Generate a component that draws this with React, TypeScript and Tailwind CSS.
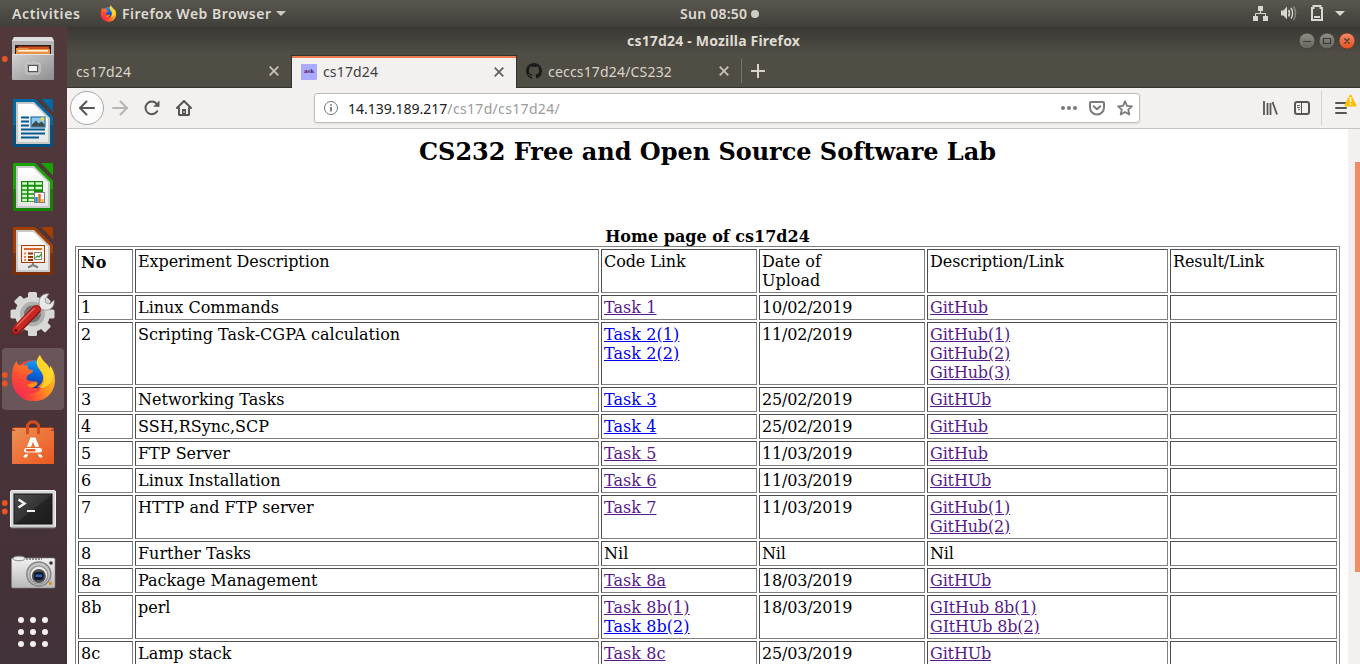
import type { ReactNode } from "react";

type Link = { text: string; fresh?: boolean };
type Row = { no: string; name: string; code: (Link | string)[]; date: string; links: (Link | string)[] };

const v = (text: string): Link => ({ text });
const n = (text: string): Link => ({ text, fresh: true });

const rows: Row[] = [
  { no: "1", name: "Linux Commands", code: [v("Task 1")], date: "10/02/2019", links: [v("GitHub")] },
  { no: "2", name: "Scripting Task-CGPA calculation", code: [n("Task 2(1)"), n("Task 2(2)")], date: "11/02/2019", links: [v("GitHub(1)"), v("GitHub(2)"), v("GitHub(3)")] },
  { no: "3", name: "Networking Tasks", code: [n("Task 3")], date: "25/02/2019", links: [v("GitHUb")] },
  { no: "4", name: "SSH,RSync,SCP", code: [n("Task 4")], date: "25/02/2019", links: [v("GitHub")] },
  { no: "5", name: "FTP Server", code: [v("Task 5")], date: "11/03/2019", links: [v("GitHub")] },
  { no: "6", name: "Linux Installation", code: [v("Task 6")], date: "11/03/2019", links: [v("GitHUb")] },
  { no: "7", name: "HTTP and FTP server", code: [v("Task 7")], date: "11/03/2019", links: [v("GitHub(1)"), v("GitHub(2)")] },
  { no: "8", name: "Further Tasks", code: ["Nil"], date: "Nil", links: ["Nil"] },
  { no: "8a", name: "Package Management", code: [v("Task 8a")], date: "18/03/2019", links: [v("GitHUb")] },
  { no: "8b", name: "perl", code: [v("Task 8b(1)"), n("Task 8b(2)")], date: "18/03/2019", links: [v("GItHub 8b(1)"), v("GItHUb 8b(2)")] },
  { no: "8c", name: "Lamp stack", code: [v("Task 8c")], date: "25/03/2019", links: [v("GitHUb")] },
];

function Cell({ children }: { children?: ReactNode }) {
  return (
    <td className="border border-t-[#4d4d4d] border-l-[#4d4d4d] border-r-[#808080] border-b-[#808080] p-[2px] align-top">
      {children}
    </td>
  );
}

function Lines({ items }: { items: (Link | string)[] }) {
  return (
    <>
      {items.map((item, i) =>
        typeof item === "string" ? (
          <div key={i}>{item}</div>
        ) : (
          <div key={i}>
            <a className={item.fresh ? "text-[#0000ee] underline" : "text-[#551a8b] underline"}>{item.text}</a>
          </div>
        ),
      )}
    </>
  );
}

function FirefoxMark() {
  return (
    <g>
      <circle cx="33" cy="33.500" r="20.500" fill="url(#fxBody)" />
      <circle cx="34.500" cy="27.500" r="14" fill="url(#fxBlue)" />
      <path d="M12 34c-.5-8 .5-14 4.500-20 .6 2 1 3.300 2.300 4.300 3-.7 5.200-.5 7.200.4.300-.7.700-1.200 1.500-1.700-.2 2.500.3 3.700 1.500 5.500 1.500.3 3 .4 4 .8 0 2-1.500 3.200-5 4.700-1.300 1.500-1.800 3-1 5 2.500 1 6 1.500 10.500 2-1.500 3-4.500 3.500-7 3.500 3 3 8 4 13 1.500L36 52c-14 2-23-7-24-18z" fill="url(#fxRed)" />
      <path d="M27 38c3.500-.5 5-2.700 8-2.700 1.700 0 2.800.7 2.500 1.700-1.500 2.500-4.500 4-7.500 3.500z" fill="#ff9414" />
      <path d="M40 8c-3.500 4-4.200 8-2 12 1.500 3 4.500 5 5 9.500.5 5-2 8.500-6 10.500 2 .5 4 .5 6-.5-3 5-9 8-15 7-4-.7-7-2.500-9-5 2 7 8 12.500 16.500 12.500C46 54 55 45 55 33c0-6-1.500-10.500-5-14.500.2 1.500.2 2.500-.2 3.500C48.500 17 41.500 14 40 8z" fill="url(#fxFlame)" />
      <path d="M40 8c-3.500 4-4.200 8-2 12 2.500 4 5.500 6 6 11 .5 4-1.500 8-5 10.500C47 41 53.500 36 53 27c-.3-3-1.500-6-3-8.500.2 1.500.2 2.500-.2 3.500C48.500 17 41.500 14 40 8z" fill="#ffe52e" opacity=".7" />
    </g>
  );
}

function Gradients() {
  return (
    <svg className="absolute size-0" aria-hidden>
      <defs>
        <linearGradient id="fxBody" x1="0" y1="0" x2="1" y2="1"><stop offset="0" stopColor="#ff5a2a" /><stop offset=".5" stopColor="#f9214e" /><stop offset="1" stopColor="#ff9a14" /></linearGradient>
        <linearGradient id="fxRed" x1="0.6" y1="0" x2=".2" y2="1"><stop offset="0" stopColor="#ff8a1c" /><stop offset=".5" stopColor="#fb4a35" /><stop offset="1" stopColor="#f52458" /></linearGradient>
        <linearGradient id="fxFlame" x1="1" y1=".1" x2="0" y2=".9"><stop offset="0" stopColor="#ffd535" /><stop offset=".45" stopColor="#ff961a" /><stop offset=".8" stopColor="#fa4a38" /><stop offset="1" stopColor="#f41f5e" /></linearGradient>
        <linearGradient id="fxBlue" x1=".6" y1="0" x2=".4" y2="1"><stop offset="0" stopColor="#14a0f5" /><stop offset=".5" stopColor="#0863d8" /><stop offset="1" stopColor="#1b2f8e" /></linearGradient>
        <linearGradient id="metal" x1="0" y1="0" x2="1" y2="1"><stop offset="0" stopColor="#d2d2d2" /><stop offset="1" stopColor="#8e8e8e" /></linearGradient>
        <linearGradient id="paper" x1="0" y1="0" x2="0" y2="1"><stop offset="0" stopColor="#ffffff" /><stop offset="1" stopColor="#e6e6e6" /></linearGradient>
        <linearGradient id="bag" x1="0" y1="0" x2="1" y2="1"><stop offset="0" stopColor="#ea9255" /><stop offset=".6" stopColor="#ee6d35" /><stop offset="1" stopColor="#e9581f" /></linearGradient>
        <linearGradient id="screen" x1="0" y1="0" x2="1" y2="1"><stop offset="0" stopColor="#4c4c4c" /><stop offset=".5" stopColor="#343434" /><stop offset=".52" stopColor="#242424" /><stop offset="1" stopColor="#1c1c1c" /></linearGradient>
        <linearGradient id="camera" x1="0" y1="0" x2="0" y2="1"><stop offset="0" stopColor="#f2f2f2" /><stop offset="1" stopColor="#b9b9b9" /></linearGradient>
        <linearGradient id="knob" x1="0" y1="0" x2="0" y2="1"><stop offset="0" stopColor="#908e87" /><stop offset="1" stopColor="#65635c" /></linearGradient>
        <linearGradient id="knobClose" x1="0" y1="0" x2="0" y2="1"><stop offset="0" stopColor="#f58a68" /><stop offset="1" stopColor="#e2501f" /></linearGradient>
      </defs>
    </svg>
  );
}

function Dock({ children, dots = [] }: { children: ReactNode; dots?: number[] }) {
  return (
    <svg className="block h-16 w-[67px] shrink-0" viewBox="0 0 67 64">
      {children}
      {dots.map((y) => (
        <circle key={y} cx="4.800" cy={y} r="2.900" fill="#e95420" />
      ))}
    </svg>
  );
}

function Sheet({ color, dark, children }: { color: string; dark: string; children: ReactNode }) {
  return (
    <g>
      <path d="M14 8h21l18 18v29a1 1 0 0 1-1 1H14a1 1 0 0 1-1-1V9a1 1 0 0 1 1-1z" fill={color} />
      <path d="M13 34h40v21a1 1 0 0 1-1 1H14a1 1 0 0 1-1-1z" fill={dark} opacity=".55" />
      <path d="M41 8h11a1 1 0 0 1 1 1v11.500z" fill={color} />
      <path d="M16 11h18l16 16v26H16z" fill="#c9c9c9" />
      <path d="M18 13h15.500L48 27.500V51H18z" fill="url(#paper)" />
      {children}
    </g>
  );
}

function Launcher() {
  return (
    <nav className="flex w-[67px] shrink-0 flex-col overflow-hidden bg-gradient-to-b from-[#51393c] via-[#4c3439] to-[#413138]">
      <Dock dots={[32]}>
        <path d="M14 10h38l2 4v38H12V14z" fill="#b5b5b5" />
        <path d="M14 10h38l2 4H12z" fill="#dedede" />
        <rect x="15" y="18" width="36" height="10" fill="#2d1c16" />
        <rect x="18" y="19.500" width="31" height="8" fill="#cf4f1d" />
        <path d="M16 21h12l1 1h21v6H16z" fill="#e99043" />
        <rect x="18" y="23" width="30" height="1.600" fill="#fff3e0" />
        <rect x="12" y="27" width="42" height="26" rx="1" fill="url(#metal)" />
        <path d="M12.500 27.500h41" stroke="#e3e3e3" />
        <rect x="26" y="36" width="14" height="11" rx="2" fill="#aaa" stroke="#d3d3d3" />
        <rect x="28.500" y="38.500" width="9" height="6" fill="#f5f5f5" stroke="#555" />
      </Dock>
      <Dock>
        <Sheet color="#0369a3" dark="#03406b">
          <path d="M21 26.500h8M21 30.500h8M21 34.500h8M21 38.500h24M21 42.500h24M21 46.500h18" stroke="#065a91" strokeWidth="1.800" />
          <rect x="31" y="26" width="14" height="10" fill="#8bc8ee" stroke="#075c93" />
          <path d="M32 35.500v-2l4-4 2.500 3 3-2 3 3v2z" fill="#3e4b4c" />
          <circle cx="42.500" cy="28" r="2" fill="#eed557" />
        </Sheet>
      </Dock>
      <Dock>
        <Sheet color="#18a303" dark="#106802">
          <rect x="21" y="26" width="22" height="21" fill="#138c06" />
          <path d="M22.200 28.500H27M28.500 28.500H34M35.500 28.500H42M22.200 33H27M28.500 33H34M35.500 33H42M22.200 37H27M28.500 37H34M22.200 41H27M28.500 41H34M22.200 45H27M28.500 45H34" stroke="#dcf6d4" strokeWidth="2.700" />
          <rect x="34.500" y="37.500" width="10" height="10" fill="#fff" stroke="#808080" />
          <path d="M36.500 42v5" stroke="#1690d2" strokeWidth="2.500" />
          <path d="M39.500 39v8" stroke="#e7681b" strokeWidth="2.500" />
          <path d="M42.500 44v3" stroke="#edb92c" strokeWidth="2.500" />
        </Sheet>
      </Dock>
      <Dock>
        <Sheet color="#a33e03" dark="#632502">
          <path d="M33 44v3M33 46l-5 2.500M33 46l5 2.500" stroke="#808080" strokeWidth="2" />
          <rect x="21.500" y="26.500" width="23" height="17" fill="#fff1e8" stroke="#a33e03" />
          <path d="M24 30h18" stroke="#d66b2e" strokeWidth="2" />
          <path d="M24 34.500h2M24 38h2M24 41h2" stroke="#e58a59" strokeWidth="2" />
          <path d="M28 34.500h5M28 38h5M28 41h5" stroke="#943407" strokeWidth="2" />
          <rect x="34.500" y="33.500" width="7" height="7" fill="#fff" stroke="#7d8d78" />
          <path d="m35.500 39 2-2 1.500 1 2.500-3" fill="none" stroke="#32972c" strokeWidth="1.300" />
        </Sheet>
      </Dock>
      <Dock>
        <g fill="#d8d8d6">
          <circle cx="32.500" cy="31" r="17.500" />
          <rect x="28" y="9" width="9" height="44" rx="1.500" />
          <rect x="28" y="9" width="9" height="44" rx="1.500" transform="rotate(45 32.500 31)" />
          <rect x="28" y="9" width="9" height="44" rx="1.500" transform="rotate(90 32.500 31)" />
          <rect x="28" y="9" width="9" height="44" rx="1.500" transform="rotate(135 32.500 31)" />
        </g>
        <circle cx="32.500" cy="31" r="10.500" fill="#777174" stroke="#b0b0af" strokeWidth="4" />
        <path d="m36 30 6-8" stroke="#999" strokeWidth="7" />
        <path d="m37 28 7-8" stroke="#e8e8e8" strokeWidth="5" />
        <path d="M39 20c0-6 4-10 10-9l-4 5 1 4 4 1 4-4c1 7-4 11-10 10-3-.5-5-3-5-7z" fill="#e8e8e8" stroke="#8d8d8d" strokeWidth=".800" />
        <path d="M16 47.500 36.500 26.500" stroke="#801611" strokeWidth="9" strokeLinecap="round" />
        <path d="M16 47 36.500 26" stroke="#c92722" strokeWidth="7" strokeLinecap="round" />
        <path d="M17 43 34 25.500" stroke="#e5655d" strokeWidth="1.500" strokeLinecap="round" />
        <circle cx="16" cy="47.500" r="1.600" fill="#401715" />
      </Dock>
      <Dock dots={[28, 36.5]}>
        <rect x="2" y="1" width="62" height="62" rx="4" fill="#6a5559" />
        <FirefoxMark />
      </Dock>
      <Dock>
        <path d="M14 16h38l2 4H12z" fill="#a53a15" />
        <path d="M12 17h42v36H12z" fill="url(#bag)" />
        <path d="M12 17l4 3h34l4-3v3H12z" fill="#b94317" />
        <path d="M27.500 23V14l3-3h5l3 3v9" fill="none" stroke="#d14e1c" strokeWidth="3" />
        <path d="M26.500 42 31.800 28.500h2.400l5.300 13.500" fill="none" stroke="#fff" strokeWidth="3.800" />
        <path d="M24 45.500c.5-1.500 1.500-2 3.500-2l-1 2.500h-2.500zM42 45.500c-.5-1.500-1.500-2-3.500-2l1 2.500H42z" fill="#fff" stroke="#fff" />
        <rect x="24" y="36" width="18" height="6.500" rx="3" fill="#ec6a31" />
        <rect x="24" y="37" width="18" height="4.500" rx="2.200" fill="#fff" />
        <rect x="26" y="38" width="9.500" height="2.500" rx="1" fill="#e95b20" />
      </Dock>
      <Dock dots={[28, 36.5]}>
        <rect x="10.500" y="15.500" width="45" height="37" rx="1.500" fill="#d9d9d9" stroke="#f2f2f2" />
        <path d="M11 52.500h44" stroke="#9a9a9a" strokeWidth="1.500" />
        <rect x="14" y="19" width="38" height="30" fill="url(#screen)" stroke="#151515" />
        <path d="m18.500 24.500 6 4-6 4" fill="none" stroke="#f2f2f2" strokeWidth="2.500" />
        <path d="M27 36h8" stroke="#f2f2f2" strokeWidth="2" />
      </Dock>
      <Dock>
        <rect x="11.500" y="19" width="43.500" height="30" rx="1.500" fill="url(#camera)" stroke="#858585" strokeWidth=".600" />
        <ellipse cx="19" cy="19.500" rx="6" ry="2.300" fill="#eee" stroke="#888" />
        <path d="M26 20h16" stroke="#777" strokeWidth="1.300" strokeDasharray="2 1" />
        <circle cx="38.800" cy="35" r="12" fill="#c4c4c4" stroke="#858585" strokeWidth="1.500" />
        <circle cx="38.800" cy="36" r="9" fill="#ededed" stroke="#999" strokeWidth="1.500" />
        <circle cx="38.800" cy="37" r="7" fill="#4d4d4d" />
        <rect x="34" y="33" width="9.500" height="8" rx="2" fill="#12182b" />
        <path d="M35.500 35.500h6.500v2.500h-6.500z" fill="#2c62b1" />
        <circle cx="51" cy="24" r="1.800" fill="#353535" />
        <rect x="49" y="43" width="2.800" height="2.800" fill="#e58a16" />
      </Dock>
      <Dock>
        {[17, 29, 41].map((y) => [21, 33, 45].map((x) => <circle key={`${x}-${y}`} cx={x} cy={y} r="3" fill="#f2efee" />))}
      </Dock>
    </nav>
  );
}

function Close({ className }: { className: string }) {
  return (
    <svg className={className} viewBox="0 0 10 10" fill="none" stroke="currentColor" strokeWidth="1.700">
      <path d="m.7.700 8.600 8.600M9.300.700.7 9.300" />
    </svg>
  );
}

function TopBar() {
  return (
    <header className="flex h-[27px] shrink-0 items-center bg-gradient-to-b from-[#5a574f] to-[#403f3a] text-[14px] font-semibold text-[#dfdbd2]">
      <span className="ml-3 w-[88px] whitespace-nowrap tracking-[0.6px]">Activities</span>
      <svg className="size-[17px]" viewBox="11 7 45 48"><FirefoxMark /></svg>
      <span className="ml-[5px] w-[154px] whitespace-nowrap tracking-[0.480px]">Firefox Web Browser</span>
      <svg className="h-[5px] w-[10px]" viewBox="0 0 10 5"><path d="M0 0h10L5 5z" fill="#ccc9c2" /></svg>
      <span className="ml-[394px] w-[71px] whitespace-nowrap tracking-[0.250px]">Sun 08:50</span>
      <span className="size-2 rounded-full bg-[#cfccc5]" />
      <svg className="ml-auto h-[27px] w-[108px] shrink-0" viewBox="1252 0 108 27" fill="#dad7d0">
        <path d="M1258 6h5v5h-5zM1253 16h5v5h-5zM1263 16h5v5h-5z" />
        <path d="M1260.500 11v2.500M1255.500 16v-2.500h10V16" fill="none" stroke="#dad7d0" />
        <path d="M1281 10.500h2.500l3.500-4v13l-3.500-4h-2.500z" />
        <path d="M1288.500 10c1.300 2 1.300 4.500 0 6.500" fill="none" stroke="#dad7d0" strokeWidth="1.500" />
        <path d="M1291 8c2 3 2 7.500 0 10.500" fill="none" stroke="#dad7d0" strokeWidth="1.500" />
        <path d="M1293.500 6.500c2.500 4 2.500 9.500 0 13.500" fill="none" stroke="#87847c" strokeWidth="1.500" />
        <path d="M1312 20V8h1.500V6h7v2h1.500v12z" fill="none" stroke="#dad7d0" strokeWidth="2" />
        <path d="M1314 16h6v2h-6z" />
        <path d="M1335 11h10l-5 5z" />
      </svg>
    </header>
  );
}

function TabStrip() {
  return (
    <div className="flex h-[34px] shrink-0 items-end text-[14px] text-[#d9d5cc]">
      <div className="flex h-[34px] w-[224px] items-center border-b border-[#33322e] pl-[9px] pr-[12px]">
        <span className="pt-[2px] tracking-[0.150px]">cs17d24</span>
        <Close className="ml-auto size-[10px] text-[#c9c5bc]" />
      </div>
      <div className="flex h-[33px] w-[226px] items-center border-x border-t border-[#33322e] bg-[#f2f1f0] pl-[9px] pr-[12px] text-[#3f3f3f] shadow-[inset_0_2px_0_#ee7b50]">
        <span className="mb-px flex size-4 items-center justify-center rounded-[1px] bg-[#aaaaff] font-['Liberation_Serif'] text-[7px] font-bold leading-none text-[#4c2356]">ask</span>
        <span className="ml-[6px] pb-[2px] tracking-[0.150px]">cs17d24</span>
        <Close className="ml-auto size-[10px] text-[#5e5e5e]" />
      </div>
      <div className="flex h-[34px] flex-1 items-center border-b border-[#33322e] pl-[9px]">
        <svg className="size-4" viewBox="0 0 16 16" fill="#1b1b1b">
          <path d="M8 0C3.580 0 0 3.580 0 8c0 3.540 2.290 6.530 5.470 7.590.4.070.55-.17.55-.38 0-.19-.01-.82-.01-1.490-2.010.37-2.530-.49-2.690-.94-.09-.23-.48-.94-.82-1.130-.28-.15-.68-.52-.01-.53.63-.01 1.080.58 1.230.82.72 1.210 1.870.87 2.330.66.07-.52.28-.87.51-1.070-1.780-.2-3.640-.89-3.640-3.950 0-.87.31-1.590.82-2.150-.08-.2-.36-1.020.08-2.120 0 0 .67-.21 2.200.82.64-.18 1.320-.27 2-.27s1.360.09 2 .27c1.530-1.040 2.200-.82 2.200-.82.44 1.100.16 1.920.08 2.120.51.56.82 1.270.82 2.150 0 3.070-1.870 3.750-3.650 3.950.29.25.54.73.54 1.480 0 1.070-.01 1.930-.01 2.200 0 .21.15.46.55.38A8.010 8.010 0 0 0 16 8c0-4.420-3.580-8-8-8z" />
        </svg>
        <span className="ml-[6px] w-[171px] pt-[2px] tracking-[0.180px]">ceccs17d24/CS232</span>
        <Close className="size-[10px] text-[#c9c5bc]" />
        <span className="ml-[12px] h-6 w-px bg-[#77746c]" />
        <svg className="ml-[9px] size-[14px]" viewBox="0 0 14 14" stroke="#d8d4cb" strokeWidth="2"><path d="M7 0v14M0 7h14" /></svg>
      </div>
    </div>
  );
}

function Toolbar() {
  return (
    <div className="flex h-[41px] shrink-0 items-center border-b border-[#c7c3bf] bg-[#f2f1f0] text-[14px]">
      <span className="ml-[3px] flex size-[34px] items-center justify-center rounded-full border border-[#a9a7a5] bg-[#fcfcfc]">
        <svg className="size-4" viewBox="0 0 16 16" fill="none" stroke="#575655" strokeWidth="2" strokeLinecap="round" strokeLinejoin="round"><path d="M15 8H1.500M7.500 1.500 1 8l6.500 6.500" /></svg>
      </span>
      <svg className="ml-2 size-4" viewBox="0 0 16 16" fill="none" stroke="#b8b6b4" strokeWidth="2" strokeLinecap="round" strokeLinejoin="round"><path d="M1 8h13.500M8.500 1.500 15 8l-6.500 6.500" /></svg>
      <svg className="ml-4 size-4" viewBox="0 0 16 16" fill="none" stroke="#575655" strokeWidth="2"><path d="M13.200 11.200A6.300 6.300 0 1 1 12.500 3.700L14 5.500" strokeLinecap="round" /><path d="M15.500.500v6.300H9.200z" fill="#575655" stroke="none" /></svg>
      <svg className="ml-4 size-4" viewBox="0 0 16 16" fill="none" stroke="#575655" strokeWidth="2" strokeLinecap="round" strokeLinejoin="round"><path d="m1 8 7-7 7 7" /><path d="M3 8v6.500a.5.500 0 0 0 .5.500h9a.5.500 0 0 0 .5-.500V8" /><path d="M6 15V9h4v6z" fill="#575655" stroke="none" /><path d="M8 11.500v1" stroke="#f2f1f0" strokeWidth="1" /></svg>
      <div className="ml-[122px] flex h-[30px] w-[826px] items-center rounded-[3px] border border-[#bfbcb9] bg-white pl-[9px] pr-[6px] shadow-[0_1px_2px_rgba(0,0,0,0.08)]">
        <svg className="size-[14px]" viewBox="0 0 14 14" fill="none" stroke="#737373"><circle cx="7" cy="7" r="6.500" /><path d="M7 6v4.500M7 3.200v1.500" strokeWidth="1.800" /></svg>
        <span className="ml-[10px] whitespace-nowrap text-[#202020]">14.139.189.217<span className="tracking-[0.330px] text-[#9b9b9b]">/cs17d/cs17d24/</span></span>
        <svg className="ml-auto h-4 w-4" viewBox="0 0 16 16" fill="#7a7a7a"><circle cx="2" cy="8" r="2" /><circle cx="8" cy="8" r="2" /><circle cx="14" cy="8" r="2" /></svg>
        <svg className="ml-3 size-4" viewBox="0 0 16 16" fill="none" stroke="#7a7a7a" strokeWidth="2" strokeLinecap="round" strokeLinejoin="round"><path d="M2 2h12a1 1 0 0 1 1 1v4.500a7 7 0 0 1-14 0V3a1 1 0 0 1 1-1z" /><path d="m4.700 6.200 3.300 3 3.300-3" /></svg>
        <svg className="ml-3 size-4" viewBox="0 0 16 16" fill="none" stroke="#7a7a7a" strokeWidth="1.800" strokeLinejoin="round"><path d="m8 1.300 2 4.500 4.900.500-3.700 3.300 1.100 4.900L8 12l-4.300 2.500 1.100-4.900L1.100 6.300 6 5.800z" /></svg>
      </div>
      <svg className="ml-[122px] size-4" viewBox="0 0 16 16" stroke="#575655" fill="none" strokeWidth="2"><path d="M2 1v14M5.500 3v12M8.500 3v12M10.500 2l4.500 12.500" strokeWidth="1.800" /></svg>
      <svg className="ml-4 size-4" viewBox="0 0 16 16" stroke="#575655" fill="none"><rect x="1" y="2" width="14" height="12" rx="2" strokeWidth="2" /><path d="M7.500 2v12" /><path d="M3 5.500h3M3 7.500h3M4 9.500h2" strokeWidth=".900" /></svg>
      <span className="ml-[11px] h-[34px] w-px bg-[#d6d3d0]" />
      <svg className="ml-[12px] h-[34px] w-6" viewBox="0 0 24 34"><path d="M1 11.500h10M1 16.500h10M1 21.500h10" transform="translate(1 .5)" stroke="#575655" strokeWidth="2" strokeLinecap="round" /><path d="M16.500 4.500 21.500 14.500h-10z" fill="#ffbf00" stroke="#ffbf00" strokeWidth="2" strokeLinejoin="round" /><path d="M16.500 6v5M16.500 12.300v1.600" stroke="#fff" strokeWidth="1.600" /></svg>
    </div>
  );
}

function PageBody() {
  return (
    <div className="flex min-h-0 flex-1 bg-white">
      <main className="min-w-0 flex-1 overflow-hidden px-2 font-['DejaVu_Serif',serif] text-[16px] leading-[19px] text-black">
        <h1 className="pt-[9px] text-center text-[24px] font-bold leading-[28px] tracking-[-0.030px]">CS232 Free and Open Source Software Lab</h1>
        <table className="mt-[61px] w-[1265px] table-fixed border-separate border-spacing-[2px] border border-[#808080]">
          <caption className="text-center font-bold">Home page of cs17d24</caption>
          <colgroup>
            <col className="w-[55px]" />
            <col className="w-[464px]" />
            <col className="w-[156px]" />
            <col className="w-[166px]" />
            <col className="w-[241px]" />
            <col className="w-[167px]" />
          </colgroup>
          <tbody>
            <tr>
              <Cell><b className="block h-[19px] pt-px">No</b></Cell>
              <Cell><span className="tracking-[-0.100px]">Experiment Description</span></Cell>
              <Cell><span className="tracking-[-0.100px]">Code Link</span></Cell>
              <Cell>Date of<br />Upload</Cell>
              <Cell><span className="tracking-[-0.080px]">Description/Link</span></Cell>
              <Cell><span className="tracking-[-0.150px]">Result/Link</span></Cell>
            </tr>
            {rows.map((row) => (
              <tr key={row.no}>
                <Cell>{row.no}</Cell>
                <Cell>{row.name}</Cell>
                <Cell><div className="tracking-[0.060px]"><Lines items={row.code} /></div></Cell>
                <Cell><span className="tracking-[-0.190px]">{row.date}</span></Cell>
                <Cell><div className="tracking-[-0.150px]"><Lines items={row.links} /></div></Cell>
                <Cell />
              </tr>
            ))}
          </tbody>
        </table>
      </main>
      <div className="flex w-3 shrink-0 justify-end bg-[#f2f1f0] pt-[33px]">
        <span className="h-[410px] w-[5px] bg-[#f28c67]" />
      </div>
    </div>
  );
}

export default function App() {
  return (
    <div className="flex h-[664px] w-[1360px] flex-col overflow-hidden font-['Noto_Sans','Open_Sans',sans-serif]">
      <Gradients />
      <TopBar />
      <div className="flex min-h-0 flex-1">
        <Launcher />
        <section className="flex min-w-0 flex-1 flex-col bg-[#504d45]">
          <div className="flex h-[27px] shrink-0 items-center bg-gradient-to-b from-[#3a3934] to-[#504d45] text-[14px] font-bold text-[#dfdbd2]">
            <span className="ml-[560px] whitespace-nowrap tracking-[0.190px]">cs17d24 - Mozilla Firefox</span>
            <svg className="ml-auto mr-1 h-[18px] w-[58px]" viewBox="1298 32 58 18" fill="none">
              <circle cx="1307" cy="41" r="8" fill="url(#knob)" stroke="#393833" strokeWidth=".800" />
              <circle cx="1327" cy="41" r="8" fill="url(#knob)" stroke="#393833" strokeWidth=".800" />
              <circle cx="1347" cy="41" r="8" fill="url(#knobClose)" stroke="#5a3526" strokeWidth=".800" />
              <path d="M1303 41.500h8M1323.500 38.500h7v5h-7zM1344.500 38.500l5 5M1349.500 38.500l-5 5" stroke="#3b3a35" strokeWidth="1.200" />
            </svg>
          </div>
          <TabStrip />
          <Toolbar />
          <PageBody />
        </section>
      </div>
    </div>
  );
}
